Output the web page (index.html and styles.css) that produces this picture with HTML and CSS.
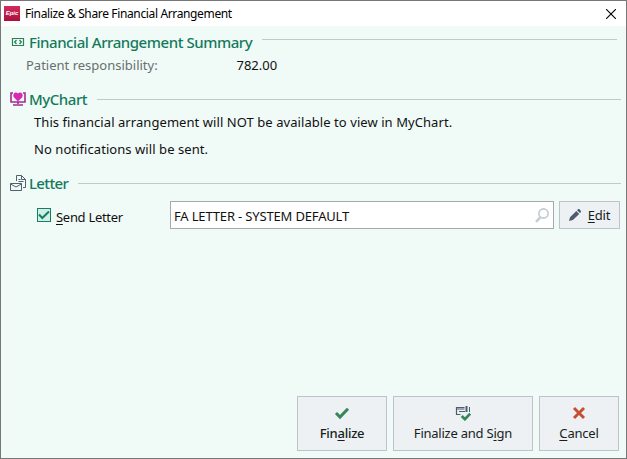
FILE: index.html
```html
<!DOCTYPE html>
<html lang="en">
<head>
<meta charset="utf-8">
<title>Finalize &amp; Share Financial Arrangement</title>
<link rel="stylesheet" href="styles.css">
</head>
<body>
<div class="window">
  <header class="titlebar">
    <span class="logo">Epic</span>
    <span class="title">Finalize &amp; Share Financial Arrangement</span>
    <svg class="close" width="10" height="10" viewBox="0 0 10 10"><path d="M0 0L10 10M10 0L0 10" stroke="#000" stroke-width="1.1"/></svg>
  </header>
  <main class="content">
    <section class="summary">
      <div class="head">
        <svg class="icon" width="16" height="16" viewBox="0 0 16 16" fill="none" stroke="#2c8159"><path d="M2.500 4.500h11v7h-11z" stroke-width="1.200"/><path d="M6.500 6L4.700 8l1.800 2M9.500 6l1.800 2-1.800 2" stroke-width="1.300"/></svg>
        <h2 class="h-summary">Financial Arrangement Summary</h2><i class="rule"></i>
      </div>
      <div class="pair"><span class="label">Patient responsibility:</span><span class="amount">782.00</span></div>
    </section>
    <section class="mychart">
      <div class="head">
        <svg class="icon" width="16" height="16" viewBox="0 0 16 16"><path d="M3 2H1v9h14V2h-2M8 11v2M3 14h10" fill="none" stroke="#a52a91" stroke-width="1.600"/><path d="M8 10.500L3.800 6.300C2 3 5.500 0 8 2.500C10.500 0 14 3 12.200 6.300z" fill="#d929b0"/></svg>
        <h2 class="h-mychart">MyChart</h2><i class="rule"></i>
      </div>
      <p class="line1">This financial arrangement will NOT be available to view in MyChart.</p>
      <p class="line2">No notifications will be sent.</p>
    </section>
    <section class="letter">
      <div class="head">
        <svg class="icon" width="16" height="16" viewBox="0 0 16 16" fill="none" stroke="#51606f"><path d="M6.500 6V.5h5l4 4v8H13M11.500.5v4h4M8.500 4.500h2M8.500 6.500h5"/><path d="M.5 8.500h11v7H.5zM.5 9L6 12l5.500-3"/></svg>
        <h2 class="h-letter">Letter</h2><i class="rule"></i>
      </div>
      <div class="form">
        <span class="check"><svg width="14" height="14" viewBox="0 0 14 14"><path d="M2 6.500L5.300 10L12 3.500" fill="none" stroke="#118064" stroke-width="2"/></svg></span>
        <span class="send"><u>S</u>end Letter</span>
        <div class="field"><span class="value">FA LETTER - SYSTEM DEFAULT</span>
          <svg width="14" height="15" viewBox="0 0 14 15" fill="none" stroke="#c5ccd4"><circle cx="8.500" cy="5.500" r="4.600" stroke-width="1.700"/><path d="M5.300 9.300L1 13.800" stroke-width="2.500"/></svg>
        </div>
        <button class="btn edit"><svg width="12" height="12" viewBox="0 0 12 12" fill="#4c5d6d"><path d="M0 12l1-3.800L7.300 2l2.900 2.900L3.900 11zM8 1.300L9.200.1h1L12 1.900v1L10.800 4.100z"/></svg><span class="t-edit"><u>E</u>dit</span></button>
      </div>
    </section>
    <footer class="actions">
      <button class="btn big finalize"><svg width="16" height="16" viewBox="0 0 16 16"><path d="M2 8l4 4 8-8.300" fill="none" stroke="#368659" stroke-width="3"/></svg><span class="t-finalize">Fin<u>a</u>lize</span></button>
      <button class="btn big sign"><svg width="16" height="16" viewBox="0 0 16 16" fill="none"><path d="M5.500 9.500h-4v-7h8M1.500 4h8M4 6.500h6" stroke="#4c5d6d" stroke-width="1.200"/><path d="M11.500 1v6" stroke="#4c5d6d" stroke-width="2"/><path d="M14.500 2v5" stroke="#4c5d6d"/><path d="M6.700 11l3.200 3.200 5.300-5.500" stroke="#368659" stroke-width="2.700"/></svg><span class="t-sign">Finalize and S<u>i</u>gn</span></button>
      <button class="btn big cancel"><svg width="16" height="16" viewBox="0 0 16 16"><path d="M3 3l10 10M13 3L3 13" stroke="#c64d30" stroke-width="2.900"/></svg><span class="t-cancel"><u>C</u>ancel</span></button>
    </footer>
  </main>
</div>
</body>
</html>
```
FILE: styles.css
```css
* { box-sizing: border-box; }
body { margin: 0; font: 13px/20px "Noto Sans", "Open Sans", sans-serif; color: #111; }
svg { display: block; flex: none; }
u { text-decoration: underline; text-decoration-thickness: 1px; text-underline-offset: 2px; text-decoration-skip-ink: none; }
span, p, h2 { white-space: nowrap; }
.window { height: 459px; border: 1px solid #777; background: #f0faf7; display: flex; flex-direction: column; }
.titlebar { height: 25px; background: #fff; display: flex; align-items: center; padding: 0 10px 0 3px; color: #000; }
.logo { width: 16px; height: 15px; background: linear-gradient(#d32c5c, #a9103f); color: #fff; font: italic bold 6px/14px "Liberation Sans", sans-serif; text-align: center; }
.title { margin-left: 5px; font-size: 12px; letter-spacing: -.36px; }
.close { margin-left: auto; }
.content { flex: 1; display: flex; flex-direction: column; padding: 7px 5px 7px 9px; }
.summary { height: 57px; }
.mychart { height: 84px; }
.head { display: flex; height: 20px; }
.icon { margin-top: 1px; }
.head h2 { margin: -1px 0 0 3px; font-size: 15px; line-height: 20px; font-weight: 500; letter-spacing: -.45px; color: #157a5c; }
.head .h-letter { letter-spacing: -.65px; }
.rule { flex: 1; height: 1px; margin: 6px 0 0 10px; background: #c3c9c7; }
.summary .rule { margin-right: 4px; }
.mychart .rule, .letter .rule { margin-top: 9px; }
.pair { display: flex; padding: 2px 0 0 16px; }
.label { width: 210.5px; color: #67706d; }
p { margin: 2px 0 7px 24px; letter-spacing: .065px; }
.form { display: flex; margin: 7px 1px 0 0; height: 28px; }
.check { width: 14px; height: 14px; margin: 7px 0 0 27px; border: 1px solid #118064; background: #d2eee5; }
.check svg { margin: -1px; }
.send { width: 114px; margin: 6px 0 0 5px; letter-spacing: -.3px; }
.field { width: 384px; border: 1px solid #a6a9ac; background: #fff; display: flex; justify-content: space-between; align-items: center; padding: 0 4px 0 3px; }
.value { padding-top: 2px; letter-spacing: -.16px; }
.btn { margin: 0; padding: 0; border: 1px solid #bdc3c9; background: #edf1f4; color: #1a1e22; font: inherit; display: flex; align-items: center; justify-content: center; }
.edit { width: 61px; margin-left: 5px; }
.edit svg { margin-right: 7px; }
.t-edit { letter-spacing: -.2px; }
.actions { margin-top: auto; display: flex; justify-content: flex-end; gap: 6px; padding-right: 2px; }
.big { flex-direction: column; height: 55px; gap: 2px; }
.finalize { width: 90px; }
.sign { width: 140px; }
.cancel { width: 80px; }
.t-finalize { font-weight: 500; letter-spacing: -.25px; }
.t-sign { letter-spacing: -.23px; }
.t-cancel { letter-spacing: -.2px; }
```
